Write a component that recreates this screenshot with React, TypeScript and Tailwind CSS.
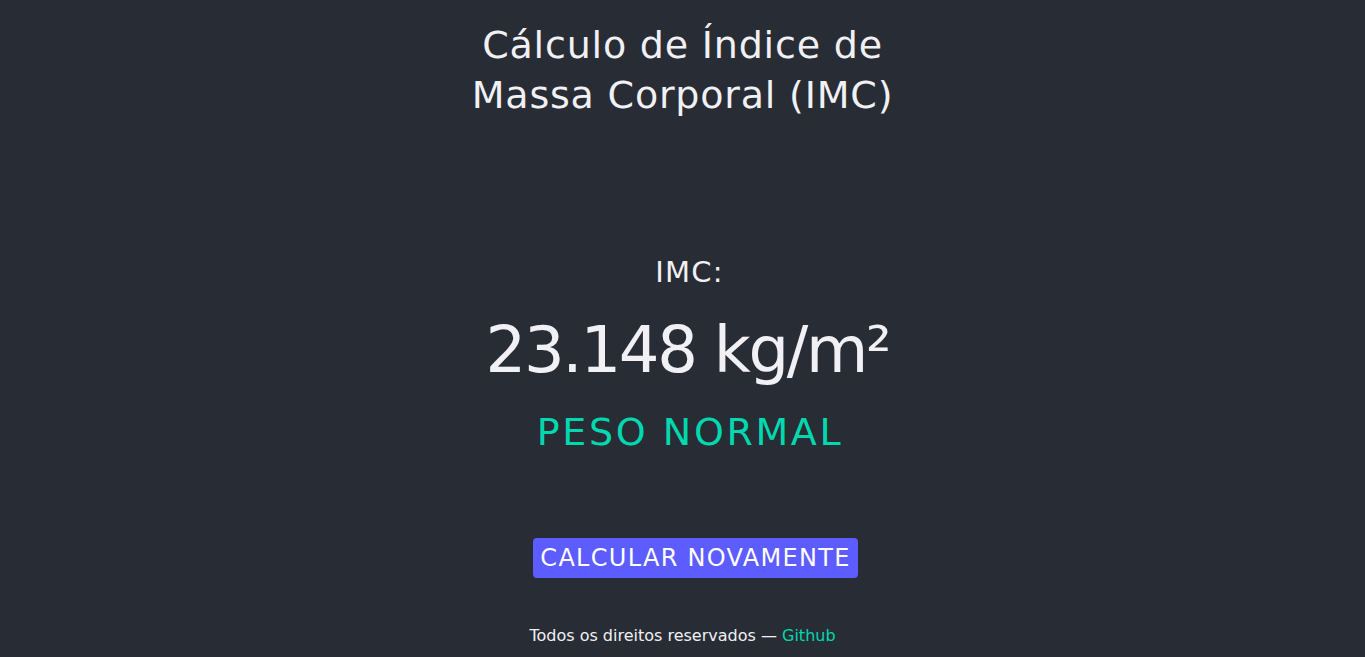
export default function App() {
	return (
		<div
			className="min-h-screen bg-[#282c34] text-[#f0f0f5] flex flex-col items-center text-center"
			style={{ fontFamily: '"DejaVu Sans", "Open Sans", sans-serif' }}
		>
			<h1 className="pt-[20px] text-[38px] leading-[50px] font-normal tracking-[0.8px]">
				Cálculo de Índice de
				<br />
				Massa Corporal (IMC)
			</h1>

			<main className="flex flex-col items-center">
				<p className="mt-[134px] ml-[14px] text-[29px] leading-[36px] tracking-[1.2px]">
					IMC:
				</p>
				<p className="mt-[20px] ml-[10px] text-[64px] leading-[80px] tracking-[-2.3px]">
					23.148 kg/m²
				</p>
				<p className="mt-[18px] ml-[15px] text-[38px] leading-[48px] tracking-[2.6px] text-[#00d8b0]">
					PESO NORMAL
				</p>
				<button className="mt-[82px] ml-[26px] h-[40px] px-[7px] rounded-[4px] bg-[#5c5cff] text-[24px] leading-[40px] tracking-[1.3px] text-white">
					CALCULAR NOVAMENTE
				</button>
			</main>

			<footer className="mt-[46px] text-[16px] leading-[24px]">
				Todos os direitos reservados —{" "}
				<a href="#" className="text-[#00d8b0]">
					Github
				</a>
			</footer>
		</div>
	);
}
